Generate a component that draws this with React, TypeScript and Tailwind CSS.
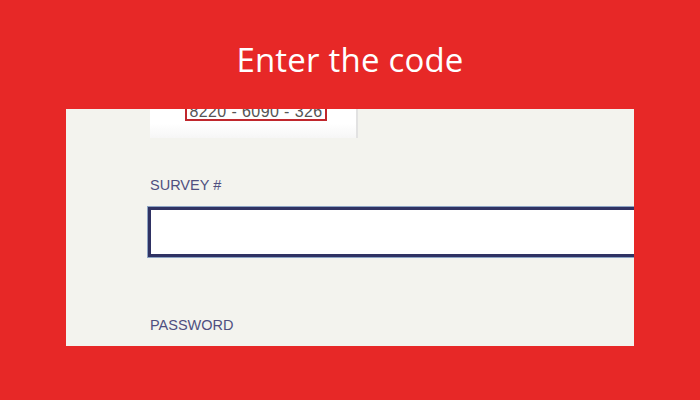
export default function App() {
  return (
    <div className="w-[700px] h-[400px] bg-[#e72827] flex flex-col overflow-hidden">
      <div className="h-[109px] pt-[37px] text-center">
        <h1 className="text-white text-[33px] leading-[46px] font-['Open_Sans',sans-serif] tracking-[0.2px]">
          Enter the code
        </h1>
      </div>

      <div className="ml-[66px] w-[568px] h-[237px] bg-[#f3f3ee] overflow-hidden pl-[82px] font-['Liberation_Sans',Arial,sans-serif]">
        {/* receipt image, cropped at the top */}
        <div className="ml-[2px] mt-[-20px] w-[208px] h-[49px] bg-gradient-to-b from-white from-70% to-[#f6f6f6] border-r-2 border-[#e2e2e2]">
          <div className="ml-[35px] pt-[10px]">
            <div className="w-[142px] h-[22px] border-2 border-t-0 border-[#c0272d] bg-white flex items-end justify-center pb-[1px] text-[#555] text-[16px] leading-[12px] tracking-[0.4px]">
              8220 - 6090 - 326
            </div>
          </div>
        </div>

        <label className="block mt-[39px] ml-[2px] text-[14.5px] leading-4 text-[#4f4f80]">
          SURVEY #
        </label>
        <input
          type="text"
          className="block mt-[14px] w-[520px] h-[50px] bg-white border-[3px] border-[#2f3263] outline outline-1 outline-[#4a6fa8]/60"
        />

        <label className="block mt-[60px] ml-[2px] text-[14.5px] leading-4 text-[#4f4f80]">
          PASSWORD
        </label>
      </div>
    </div>
  );
}
